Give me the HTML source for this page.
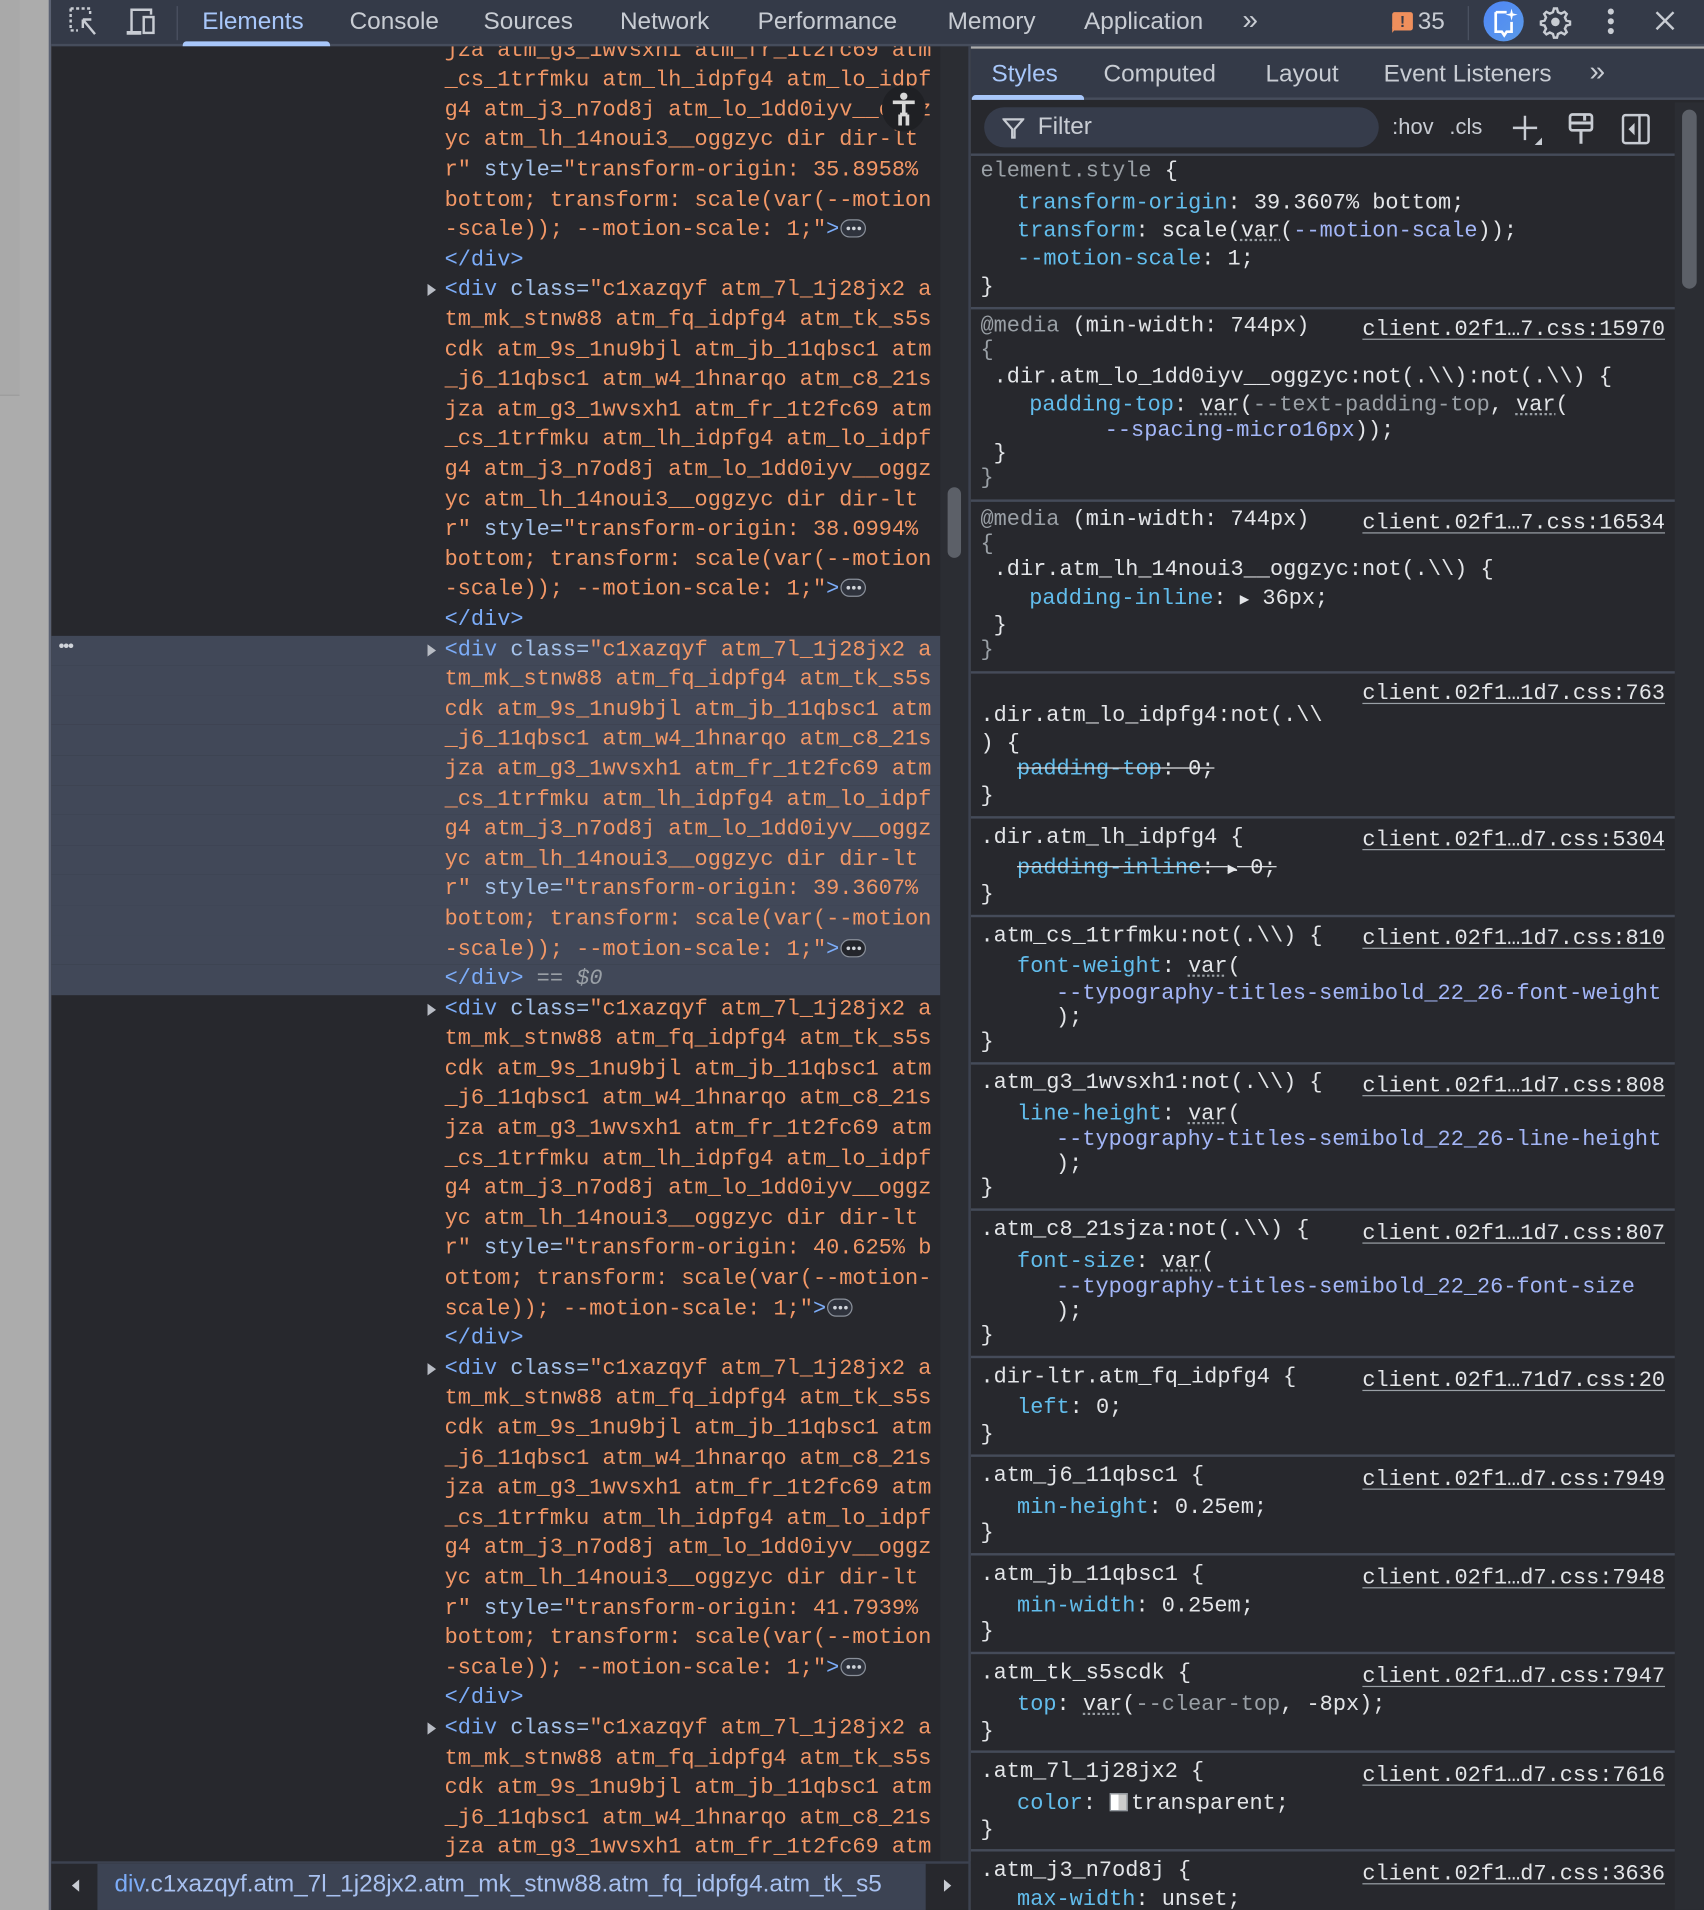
<!DOCTYPE html>
<html><head><meta charset="utf-8">
<style>
*{margin:0;padding:0;box-sizing:border-box}
html,body{width:1704px;height:1910px;overflow:hidden;background:#acacac}
#w{position:absolute;left:0;top:0;width:1399px;height:1568px;transform:scale(1.21801,1.21811);transform-origin:0 0;font-family:"Liberation Sans",sans-serif}
.abs{position:absolute}
.mono{font-family:"Liberation Mono",monospace;font-size:18px}
#el{left:42px;top:0;width:755px;height:1568px;background:#27282d;overflow:hidden}
#tb{left:42px;top:0;width:1357px;height:38px;background:#343a48;border-bottom:2px solid #464d5c}
.tab{position:absolute;top:7px;font-size:20px;color:#c8ccd3;white-space:nowrap}
#code{position:absolute;left:0;top:29.7px;width:730px;line-height:24.6px}
#code div{height:24.6px;padding-left:323px;color:#f29766;position:relative;white-space:pre}
.t{color:#7cacf8}.a{color:#a5c2ea}
.sel{background:#414858}
.tri{position:absolute;left:309px;top:7px;width:0;height:0;border-left:7px solid #b8bcc4;border-top:5px solid transparent;border-bottom:5px solid transparent}
.dots{display:inline-block;width:21px;height:15px;border:1.5px solid #8a909a;border-radius:8px;vertical-align:-2px;position:relative;background:#2f333d;margin-left:1px}
.dots:after{content:"";position:absolute;left:4px;top:5px;width:3px;height:3px;background:#d0d4da;border-radius:50%;box-shadow:4.5px 0 #d0d4da,9px 0 #d0d4da}
#sp{left:797px;top:40px;width:602px;height:1528px;background:#27282d;overflow:hidden}
.sec{position:absolute;left:0;width:578px;border-bottom:2px solid #454b59}
.ln{position:absolute;left:8px;height:22px;line-height:22px;color:#e3e5e8;white-space:pre}
.lk{position:absolute;right:32px;height:22px;line-height:22px;color:#e3e5e8;text-decoration:underline;text-decoration-color:#9aa0a6;text-underline-offset:3px;white-space:pre}
.p{color:#62bdec}.g{color:#9aa0a6}.v{color:#a3b6f7}
.u{text-decoration:underline dotted #9aa0a6;text-underline-offset:3px}
.s{text-decoration:line-through;text-decoration-color:#e3e5e8}
</style></head><body>
<div id="w">
<div class="abs" style="left:0;top:0;width:42px;height:1568px;background:#acacac"></div>
<div class="abs" style="left:0;top:0;width:16px;height:325px;background:#a9a9a9;border-bottom:1px solid #9c9c9c"></div>
<div class="abs" style="left:40px;top:0;width:2px;height:1568px;background:#5a6172"></div>

<div id="el" class="abs">
<div id="code" class="mono">
<div>jza atm_g3_1wvsxh1 atm_fr_1t2fc69 atm</div>
<div>_cs_1trfmku atm_lh_idpfg4 atm_lo_idpf</div>
<div>g4 atm_j3_n7od8j atm_lo_1dd0iyv__oggz</div>
<div>yc atm_lh_14noui3__oggzyc dir dir-lt</div>
<div>r" <span class="a">style=</span>"transform-origin: 35.8958%</div>
<div>bottom; transform: scale(var(--motion</div>
<div>-scale)); --motion-scale: 1;"<span class="t">&gt;</span><span class="dots"></span></div>
<div><span class="t">&lt;/div&gt;</span></div>
<div><i class="tri"></i><span class="t">&lt;div</span> <span class="a">class=</span>"c1xazqyf atm_7l_1j28jx2 a</div>
<div>tm_mk_stnw88 atm_fq_idpfg4 atm_tk_s5s</div>
<div>cdk atm_9s_1nu9bjl atm_jb_11qbsc1 atm</div>
<div>_j6_11qbsc1 atm_w4_1hnarqo atm_c8_21s</div>
<div>jza atm_g3_1wvsxh1 atm_fr_1t2fc69 atm</div>
<div>_cs_1trfmku atm_lh_idpfg4 atm_lo_idpf</div>
<div>g4 atm_j3_n7od8j atm_lo_1dd0iyv__oggz</div>
<div>yc atm_lh_14noui3__oggzyc dir dir-lt</div>
<div>r" <span class="a">style=</span>"transform-origin: 38.0994%</div>
<div>bottom; transform: scale(var(--motion</div>
<div>-scale)); --motion-scale: 1;"<span class="t">&gt;</span><span class="dots"></span></div>
<div><span class="t">&lt;/div&gt;</span></div>
<div class="sel"><span style="position:absolute;left:6px;top:-4px;color:#d0d4da;font-family:'Liberation Sans';font-size:14px;letter-spacing:-1px">•••</span><i class="tri"></i><span class="t">&lt;div</span> <span class="a">class=</span>"c1xazqyf atm_7l_1j28jx2 a</div>
<div class="sel">tm_mk_stnw88 atm_fq_idpfg4 atm_tk_s5s</div>
<div class="sel">cdk atm_9s_1nu9bjl atm_jb_11qbsc1 atm</div>
<div class="sel">_j6_11qbsc1 atm_w4_1hnarqo atm_c8_21s</div>
<div class="sel">jza atm_g3_1wvsxh1 atm_fr_1t2fc69 atm</div>
<div class="sel">_cs_1trfmku atm_lh_idpfg4 atm_lo_idpf</div>
<div class="sel">g4 atm_j3_n7od8j atm_lo_1dd0iyv__oggz</div>
<div class="sel">yc atm_lh_14noui3__oggzyc dir dir-lt</div>
<div class="sel">r" <span class="a">style=</span>"transform-origin: 39.3607%</div>
<div class="sel">bottom; transform: scale(var(--motion</div>
<div class="sel">-scale)); --motion-scale: 1;"<span class="t">&gt;</span><span class="dots" style="background:#23252b"></span></div>
<div class="sel"><span class="t">&lt;/div&gt;</span> <span style="color:#9aa0a6">==</span> <i style="color:#9aa0a6">$0</i></div>
<div><i class="tri"></i><span class="t">&lt;div</span> <span class="a">class=</span>"c1xazqyf atm_7l_1j28jx2 a</div>
<div>tm_mk_stnw88 atm_fq_idpfg4 atm_tk_s5s</div>
<div>cdk atm_9s_1nu9bjl atm_jb_11qbsc1 atm</div>
<div>_j6_11qbsc1 atm_w4_1hnarqo atm_c8_21s</div>
<div>jza atm_g3_1wvsxh1 atm_fr_1t2fc69 atm</div>
<div>_cs_1trfmku atm_lh_idpfg4 atm_lo_idpf</div>
<div>g4 atm_j3_n7od8j atm_lo_1dd0iyv__oggz</div>
<div>yc atm_lh_14noui3__oggzyc dir dir-lt</div>
<div>r" <span class="a">style=</span>"transform-origin: 40.625% b</div>
<div>ottom; transform: scale(var(--motion-</div>
<div>scale)); --motion-scale: 1;"<span class="t">&gt;</span><span class="dots"></span></div>
<div><span class="t">&lt;/div&gt;</span></div>
<div><i class="tri"></i><span class="t">&lt;div</span> <span class="a">class=</span>"c1xazqyf atm_7l_1j28jx2 a</div>
<div>tm_mk_stnw88 atm_fq_idpfg4 atm_tk_s5s</div>
<div>cdk atm_9s_1nu9bjl atm_jb_11qbsc1 atm</div>
<div>_j6_11qbsc1 atm_w4_1hnarqo atm_c8_21s</div>
<div>jza atm_g3_1wvsxh1 atm_fr_1t2fc69 atm</div>
<div>_cs_1trfmku atm_lh_idpfg4 atm_lo_idpf</div>
<div>g4 atm_j3_n7od8j atm_lo_1dd0iyv__oggz</div>
<div>yc atm_lh_14noui3__oggzyc dir dir-lt</div>
<div>r" <span class="a">style=</span>"transform-origin: 41.7939%</div>
<div>bottom; transform: scale(var(--motion</div>
<div>-scale)); --motion-scale: 1;"<span class="t">&gt;</span><span class="dots"></span></div>
<div><span class="t">&lt;/div&gt;</span></div>
<div><i class="tri"></i><span class="t">&lt;div</span> <span class="a">class=</span>"c1xazqyf atm_7l_1j28jx2 a</div>
<div>tm_mk_stnw88 atm_fq_idpfg4 atm_tk_s5s</div>
<div>cdk atm_9s_1nu9bjl atm_jb_11qbsc1 atm</div>
<div>_j6_11qbsc1 atm_w4_1hnarqo atm_c8_21s</div>
<div>jza atm_g3_1wvsxh1 atm_fr_1t2fc69 atm</div>
</div>
<div class="abs" style="left:682px;top:70px;width:36px;height:38px;border-radius:50%;background:#1f2024">
<svg width="36" height="38" viewBox="0 0 36 38"><circle cx="18" cy="9" r="3" fill="#d8d8d8"/><path d="M9 14 L27 14 M18 14 L18 24 M15 24 L15 33 M21 24 L21 33 M15 24 L21 24" stroke="#d8d8d8" stroke-width="3" fill="none"/></svg></div>
<div class="abs" style="left:730px;top:38px;width:23px;height:1490px;background:#2b2d33"></div>
<div class="abs" style="left:736px;top:400px;width:11px;height:58px;border-radius:6px;background:#5c6068"></div>
<div class="abs" style="left:0;top:1528px;width:755px;height:40px;background:#27282d;border-top:2px solid #3c4250"></div>
<div class="abs" style="left:38px;top:1530px;width:680px;height:38px;background:#3c4353"></div>
<div class="abs" style="left:17px;top:1543px;width:0;height:0;border-right:6px solid #c8ccd3;border-top:5px solid transparent;border-bottom:5px solid transparent"></div>
<div class="abs" style="left:733px;top:1543px;width:0;height:0;border-left:6px solid #c8ccd3;border-top:5px solid transparent;border-bottom:5px solid transparent"></div>
<div class="abs" style="left:52px;top:1536px;font-size:20px;color:#a8c1f0;white-space:nowrap;width:664px;overflow:hidden"><span style="color:#7cacf8">div</span>.c1xazqyf.atm_7l_1j28jx2.atm_mk_stnw88.atm_fq_idpfg4.atm_tk_s5</div>
</div>

<div id="tb" class="abs"></div>
<svg class="abs" style="left:56px;top:5px" width="26" height="26" viewBox="0 0 26 26"><path d="M2 2h16v6M2 2v18h6" stroke="#c8ccd3" stroke-width="2" stroke-dasharray="2.5 2" fill="none"/><path d="M12 11 L22 23 M12 11 v7 M12 11 h7" stroke="#c8ccd3" stroke-width="2" fill="none"/></svg>
<svg class="abs" style="left:102px;top:6px" width="28" height="24" viewBox="0 0 28 24"><path d="M6 20 V2 H22 V6" stroke="#c8ccd3" stroke-width="2" fill="none"/><rect x="16" y="8" width="8" height="13" stroke="#c8ccd3" stroke-width="2" fill="none"/><path d="M2 21 H14" stroke="#c8ccd3" stroke-width="3"/></svg>
<div class="abs" style="left:145px;top:5px;width:1px;height:28px;background:#4c5363"></div>
<div class="tab" style="left:166px;color:#a8c7fa">Elements</div>
<div class="abs" style="left:150px;top:34px;width:121px;height:4px;background:#a8c7fa;border-radius:3px 3px 0 0"></div>
<div class="tab" style="left:287px">Console</div>
<div class="tab" style="left:397px">Sources</div>
<div class="tab" style="left:509px">Network</div>
<div class="tab" style="left:622px">Performance</div>
<div class="tab" style="left:778px">Memory</div>
<div class="tab" style="left:890px">Application</div>
<div class="tab" style="left:1020px;top:3px;font-size:23px">»</div>
<div class="abs" style="left:1143px;top:10px;width:17px;height:15px;background:#ef8f5c;border-radius:2px;color:#343a48;font-size:13px;font-weight:bold;text-align:center;line-height:15px">!</div>
<div class="abs" style="left:1143px;top:22px;width:0;height:0;border-left:4px solid #ef8f5c;border-bottom:5px solid transparent"></div>
<div class="tab" style="left:1164px">35</div>
<div class="abs" style="left:1205px;top:5px;width:1px;height:28px;background:#4c5363"></div>
<div class="abs" style="left:1218px;top:1px;width:33px;height:33px;border-radius:50%;background:linear-gradient(135deg,#4f86f7,#5a9ae8)"></div>
<svg class="abs" style="left:1218px;top:1px" width="33" height="36" viewBox="0 0 33 36"><path d="M10 9 H19 M10 9 V25 H15 L17 28 L19 25 H23 V17" stroke="#fff" stroke-width="2.2" fill="none"/><path d="M23 6 L24 10 L28 11 L24 12 L23 16 L22 12 L18 11 L22 10Z" fill="#fff"/></svg>
<svg class="abs" style="left:1263px;top:4px" width="28" height="28" viewBox="0 0 28 28"><path d="M14 3 l2.5 0 .8 3 2.6 1.2 2.8-1.5 1.8 1.8-1.5 2.8 1.2 2.6 3 .8v2.5l-3 .8-1.2 2.6 1.5 2.8-1.8 1.8-2.8-1.5-2.6 1.2-.8 3h-2.5l-.8-3-2.6-1.2-2.8 1.5-1.8-1.8 1.5-2.8-1.2-2.6-3-.8v-2.5l3-.8 1.2-2.6-1.5-2.8 1.8-1.8 2.8 1.5 2.6-1.2z" stroke="#c8ccd3" stroke-width="2" fill="none" transform="translate(-1.2 0)"/><circle cx="14" cy="14" r="3.5" fill="#c8ccd3"/></svg>
<div class="abs" style="left:1320px;top:7px;width:5px;height:5px;border-radius:50%;background:#c8ccd3;box-shadow:0 8px #c8ccd3,0 16px #c8ccd3"></div>
<svg class="abs" style="left:1357px;top:7px" width="20" height="20" viewBox="0 0 20 20"><path d="M3 3 L17 17 M17 3 L3 17" stroke="#c8ccd3" stroke-width="2"/></svg>

<div class="abs" style="left:795px;top:38px;width:2px;height:1530px;background:#3c4250"></div>
<div id="sp" class="abs mono">
<div class="abs" style="left:0;top:0;width:602px;height:42px;background:#343a48;border-bottom:2px solid #464d5c;font-family:'Liberation Sans',sans-serif;font-size:20px;color:#c8ccd3;white-space:nowrap">
<span class="abs" style="left:17px;top:10px;color:#a8c7fa">Styles</span>
<span class="abs" style="left:1px;top:38px;width:92px;height:4px;background:#a8c7fa;border-radius:3px 3px 0 0"></span>
<span class="abs" style="left:109px;top:10px">Computed</span>
<span class="abs" style="left:242px;top:10px">Layout</span>
<span class="abs" style="left:339px;top:10px">Event Listeners</span>
<span class="abs" style="left:508px;top:5px;font-size:23px">»</span>
</div>
<div class="abs" style="left:0;top:44px;width:578px;height:44px;border-bottom:2px solid #454b59;font-family:'Liberation Sans',sans-serif;color:#c8ccd3;white-space:nowrap">
<div class="abs" style="left:11px;top:4px;width:324px;height:33px;border-radius:17px;background:#363c4b"></div>
<svg class="abs" style="left:26px;top:12px" width="18" height="18" viewBox="0 0 18 18"><path d="M1 2 H17 L10 10 V17 H8 V10Z" stroke="#c8ccd3" stroke-width="1.8" fill="none"/></svg>
<span class="abs" style="left:55px;top:9px;font-size:20px">Filter</span>
<span class="abs" style="left:346px;top:10px;font-size:18px">:hov</span>
<span class="abs" style="left:393px;top:10px;font-size:18px">.cls</span>
<svg class="abs" style="left:445px;top:10px" width="26" height="26" viewBox="0 0 26 26"><path d="M10 1 V21 M0 11 H20" stroke="#c8ccd3" stroke-width="2"/><path d="M24 19 V25 H18Z" fill="#c8ccd3"/></svg>
<svg class="abs" style="left:490px;top:8px" width="22" height="28" viewBox="0 0 22 28"><rect x="2" y="2" width="18" height="13" rx="2" stroke="#c8ccd3" stroke-width="2.2" fill="none"/><path d="M2 9 H20 M14 2 V7 M11 15 V26" stroke="#c8ccd3" stroke-width="2.5"/></svg>
<svg class="abs" style="left:534px;top:9px" width="24" height="26" viewBox="0 0 24 26"><rect x="1.5" y="1.5" width="21" height="23" rx="2" stroke="#c8ccd3" stroke-width="2" fill="none"/><path d="M15 2 V24" stroke="#c8ccd3" stroke-width="2"/><path d="M11 8 V18 L6 13Z" fill="#c8ccd3"/></svg>
</div>
<div class="abs" style="left:578px;top:44px;width:24px;height:1484px;background:#2b2d33"></div>
<div class="abs" style="left:584px;top:50px;width:12px;height:147px;border-radius:6px;background:#5c6068"></div>

<div class="sec" style="top:88px;height:126px"></div>
<div class="ln" style="top:90px"><span class="g">element.style</span> {</div>
<div class="ln" style="top:116px;left:38px"><span class="p">transform-origin</span>: 39.3607% bottom;</div>
<div class="ln" style="top:139px;left:38px"><span class="p">transform</span>: scale(<span class="u">var</span>(<span class="v">--motion-scale</span>));</div>
<div class="ln" style="top:162px;left:38px"><span class="p">--motion-scale</span>: 1;</div>
<div class="ln" style="top:185px">}</div>

<div class="sec" style="top:216px;height:156px"></div>
<div class="ln" style="top:217px"><span class="g">@media</span> (min-width: 744px)</div><div class="lk" style="top:220px">client.02f1…7.css:15970</div>
<div class="ln g" style="top:237px">{</div>
<div class="ln" style="top:259px"> .dir.atm_lo_1dd0iyv__oggzyc:not(.\\):not(.\\) {</div>
<div class="ln" style="top:282px;left:48px"><span class="p">padding-top</span>: <span class="u">var</span>(<span class="g">--text-padding-top</span>, <span class="u">var</span>(</div>
<div class="ln" style="top:303px;left:110px"><span class="v">--spacing-micro16px</span>));</div>
<div class="ln" style="top:322px"> }</div>
<div class="ln g" style="top:342px">}</div>

<div class="sec" style="top:374px;height:139px"></div>
<div class="ln" style="top:376px"><span class="g">@media</span> (min-width: 744px)</div><div class="lk" style="top:379px">client.02f1…7.css:16534</div>
<div class="ln g" style="top:396px">{</div>
<div class="ln" style="top:417px"> .dir.atm_lh_14noui3__oggzyc:not(.\\) {</div>
<div class="ln" style="top:441px;left:48px"><span class="p">padding-inline</span>: <span style="font-size:13px">▶</span> 36px;</div>
<div class="ln" style="top:463px"> }</div>
<div class="ln g" style="top:483px">}</div>

<div class="sec" style="top:515px;height:117px"></div>
<div class="lk" style="top:519px">client.02f1…1d7.css:763</div>
<div class="ln" style="top:537px">.dir.atm_lo_idpfg4:not(.\\</div>
<div class="ln" style="top:560px">) {</div>
<div class="ln" style="top:581px;left:38px"><span class="s"><span class="p">padding-top</span>: 0;</span></div>
<div class="ln" style="top:603px">}</div>

<div class="sec" style="top:634px;height:79px"></div>
<div class="ln" style="top:637px">.dir.atm_lh_idpfg4 {</div><div class="lk" style="top:639px">client.02f1…d7.css:5304</div>
<div class="ln" style="top:662px;left:38px"><span class="s"><span class="p">padding-inline</span>: <span style="font-size:13px">▶</span> 0;</span></div>
<div class="ln" style="top:684px">}</div>

<div class="sec" style="top:715px;height:119px"></div>
<div class="ln" style="top:718px">.atm_cs_1trfmku:not(.\\) {</div><div class="lk" style="top:720px">client.02f1…1d7.css:810</div>
<div class="ln" style="top:743px;left:38px"><span class="p">font-weight</span>: <span class="u">var</span>(</div>
<div class="ln" style="top:765px;left:70px"><span class="v">--typography-titles-semibold_22_26-font-weight</span></div>
<div class="ln" style="top:785px;left:70px">);</div>
<div class="ln" style="top:805px">}</div>

<div class="sec" style="top:836px;height:118px"></div>
<div class="ln" style="top:838px">.atm_g3_1wvsxh1:not(.\\) {</div><div class="lk" style="top:841px">client.02f1…1d7.css:808</div>
<div class="ln" style="top:864px;left:38px"><span class="p">line-height</span>: <span class="u">var</span>(</div>
<div class="ln" style="top:885px;left:70px"><span class="v">--typography-titles-semibold_22_26-line-height</span></div>
<div class="ln" style="top:905px;left:70px">);</div>
<div class="ln" style="top:925px">}</div>

<div class="sec" style="top:956px;height:119px"></div>
<div class="ln" style="top:959px">.atm_c8_21sjza:not(.\\) {</div><div class="lk" style="top:962px">client.02f1…1d7.css:807</div>
<div class="ln" style="top:985px;left:38px"><span class="p">font-size</span>: <span class="u">var</span>(</div>
<div class="ln" style="top:1006px;left:70px"><span class="v">--typography-titles-semibold_22_26-font-size</span></div>
<div class="ln" style="top:1026px;left:70px">);</div>
<div class="ln" style="top:1046px">}</div>

<div class="sec" style="top:1077px;height:79px"></div>
<div class="ln" style="top:1080px">.dir-ltr.atm_fq_idpfg4 {</div><div class="lk" style="top:1083px">client.02f1…71d7.css:20</div>
<div class="ln" style="top:1105px;left:38px"><span class="p">left</span>: 0;</div>
<div class="ln" style="top:1127px">}</div>

<div class="sec" style="top:1158px;height:79px"></div>
<div class="ln" style="top:1161px">.atm_j6_11qbsc1 {</div><div class="lk" style="top:1164px">client.02f1…d7.css:7949</div>
<div class="ln" style="top:1187px;left:38px"><span class="p">min-height</span>: 0.25em;</div>
<div class="ln" style="top:1208px">}</div>

<div class="sec" style="top:1239px;height:79px"></div>
<div class="ln" style="top:1242px">.atm_jb_11qbsc1 {</div><div class="lk" style="top:1245px">client.02f1…d7.css:7948</div>
<div class="ln" style="top:1268px;left:38px"><span class="p">min-width</span>: 0.25em;</div>
<div class="ln" style="top:1289px">}</div>

<div class="sec" style="top:1320px;height:79px"></div>
<div class="ln" style="top:1323px">.atm_tk_s5scdk {</div><div class="lk" style="top:1326px">client.02f1…d7.css:7947</div>
<div class="ln" style="top:1349px;left:38px"><span class="p">top</span>: <span class="u">var</span>(<span class="g">--clear-top</span>, -8px);</div>
<div class="ln" style="top:1371px">}</div>

<div class="sec" style="top:1401px;height:79px"></div>
<div class="ln" style="top:1404px">.atm_7l_1j28jx2 {</div><div class="lk" style="top:1407px">client.02f1…d7.css:7616</div>
<div class="ln" style="top:1430px;left:38px"><span class="p">color</span>: <span style="display:inline-block;width:15px;height:15px;border:1px solid #9aa0a6;background:linear-gradient(90deg,#fff 50%,#ccc 50%);vertical-align:-2px;margin-right:3px"></span>transparent;</div>
<div class="ln" style="top:1452px">}</div>

<div class="ln" style="top:1485px">.atm_j3_n7od8j {</div><div class="lk" style="top:1488px">client.02f1…d7.css:3636</div>
<div class="ln" style="top:1509px;left:38px"><span class="p">max-width</span>: unset;</div>
</div>
</div>
</body></html>
